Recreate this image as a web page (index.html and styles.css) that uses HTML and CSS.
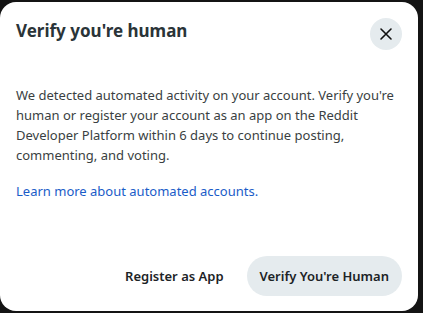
FILE: index.html
```html
<!DOCTYPE html>
<html>
<head>
<meta charset="utf-8">
<link rel="stylesheet" href="styles.css">
</head>
<body>
<div class="modal">
  <div class="header">
    <h1 class="title">Verify you're human</h1>
    <button class="close" aria-label="Close">
      <svg width="14" height="14" viewBox="0 0 14 14"><path d="M2 2 L12 12 M12 2 L2 12" stroke="#111" stroke-width="1.6" stroke-linecap="round"/></svg>
    </button>
  </div>
  <div class="body">
    <p class="text">We detected automated activity on your account. Verify you're human or register your account as an app on the Reddit Developer Platform within 6 days to continue posting, commenting, and voting.</p>
    <a class="link" href="#">Learn more about automated accounts.</a>
  </div>
  <div class="footer">
    <button class="btn plain">Register as App</button>
    <button class="btn secondary">Verify You're Human</button>
  </div>
</div>
</body>
</html>
```

FILE: styles.css
```css
html, body {
  margin: 0;
  padding: 0;
  background: #141414;
  width: 423px;
  height: 313px;
  overflow: hidden;
}
body {
  padding-top: 2px;
  box-sizing: border-box;
  font-family: "Noto Sans", "Open Sans", sans-serif;
}
.modal {
  width: 418px;
  height: 309px;
  background: #fff;
  border-radius: 16px;
  box-sizing: border-box;
  padding: 16px 16px 15px 16px;
  display: flex;
  flex-direction: column;
}
.header {
  display: flex;
  justify-content: space-between;
  align-items: center;
  height: 32px;
}
.title {
  margin: 0;
  font-size: 17px;
  font-weight: 700;
  color: #2a3438;
  line-height: 22px;
  margin-top: -6px;
}
.close {
  width: 32px;
  height: 32px;
  border-radius: 50%;
  border: none;
  background: #e5ebee;
  display: flex;
  align-items: center;
  justify-content: center;
  padding: 0;
}
.body {
  flex: 1;
  padding-top: 35px;
}
.text {
  margin: 0 0 14px 0;
  font-size: 13px;
  line-height: 20px;
  color: #3a3f42;
}
.link {
  font-size: 13px;
  line-height: 20px;
  color: #1a5cc8;
  text-decoration: none;
}
.footer {
  display: flex;
  justify-content: flex-end;
  gap: 10px;
}
.btn {
  height: 40px;
  border: none;
  border-radius: 20px;
  padding: 0 13px;
  font-family: inherit;
  font-size: 13px;
  font-weight: 600;
  color: #1c2326;
  background: transparent;
}
.secondary {
  background: #e5ebee;
}
```
